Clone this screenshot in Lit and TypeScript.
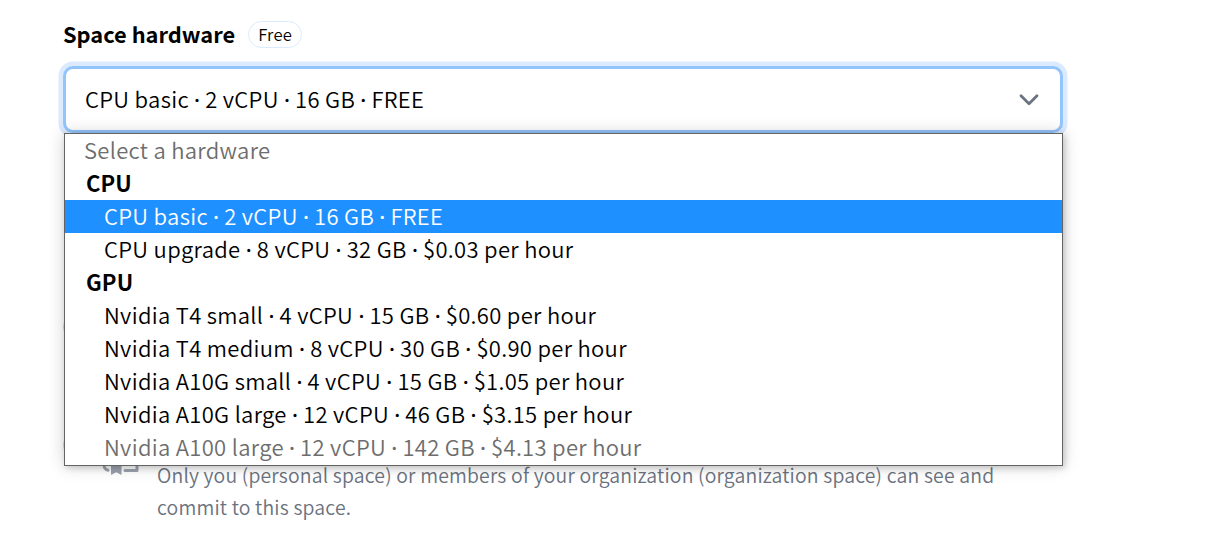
import { LitElement, html, css, svg } from "lit";
import { customElement } from "lit/decorators.js";
import { classMap } from "lit/directives/class-map.js";

type Row = { label: string; kind: "placeholder" | "group" | "option"; selected?: boolean; disabled?: boolean };

const ROWS: Row[] = [
  { label: "Select a hardware", kind: "placeholder" },
  { label: "CPU", kind: "group" },
  { label: "CPU basic · 2 vCPU · 16 GB · FREE", kind: "option", selected: true },
  { label: "CPU upgrade · 8 vCPU · 32 GB · $0.03 per hour", kind: "option" },
  { label: "GPU", kind: "group" },
  { label: "Nvidia T4 small · 4 vCPU · 15 GB · $0.60 per hour", kind: "option" },
  { label: "Nvidia T4 medium · 8 vCPU · 30 GB · $0.90 per hour", kind: "option" },
  { label: "Nvidia A10G small · 4 vCPU · 15 GB · $1.05 per hour", kind: "option" },
  { label: "Nvidia A10G large · 12 vCPU · 46 GB · $3.15 per hour", kind: "option" },
  { label: "Nvidia A100 large · 12 vCPU · 142 GB · $4.13 per hour", kind: "option", disabled: true },
];

// The middle dot takes a Latin face, where it is not full width.
const dotted = (label: string) =>
  label.split("·").map((part, i) => (i ? html`<span class="dot">·</span>${part}` : part));

@customElement("hardware-select")
export class HardwareSelect extends LitElement {
  static styles = css`
    :host { display: block; position: relative; }
    .field {
      box-sizing: border-box;
      height: 67px;
      margin-left: -1px;
      display: flex;
      align-items: center;
      justify-content: space-between;
      padding: 0 20px 3px 19px;
      border: 3px solid #93c5fd;
      border-radius: 10px;
      box-shadow: 0 0 0 4.5px #dbeafe;
      background: #fff;
      color: #000;
      font-size: 22px;
      letter-spacing: 0.31px;
      line-height: 33px;
    }
    .chevron { display: block; width: 22px; height: 14px; margin-top: 3px; }
    .menu {
      position: absolute;
      left: 0;
      top: 67px;
      width: 999px;
      height: 333px;
      box-sizing: border-box;
      border: 1px solid #646464;
      background: #fff;
      box-shadow: 0 0 16px rgba(0, 0, 0, 0.18), 2px 2px 6px rgba(0, 0, 0, 0.16);
      font-size: 22px;
      letter-spacing: 0.31px;
    }
    .row { box-sizing: border-box; height: 33px; line-height: 31px; padding-left: 39px; color: #000; white-space: nowrap; }
    .placeholder { padding-left: 19px; color: #6d6d6d; }
    .group { padding-left: 21px; font-weight: 700; letter-spacing: 0.1px; }
    .selected { background: #1e90ff; color: #fff; }
    .disabled { color: #6d6d6d; }
    .dot { font-family: "Noto Sans", sans-serif; font-weight: 500; letter-spacing: -0.1px; line-height: 1; }
  `;

  render() {
    return html`
      <div class="field">
        <span>${dotted("CPU basic · 2 vCPU · 16 GB · FREE")}</span>
        <svg class="chevron" viewBox="0 0 22 14" fill="none">
          <path d="M3 2.8 11 10.8 19 2.8" stroke="#6b7280" stroke-width="2.8" stroke-linecap="round" stroke-linejoin="round" />
        </svg>
      </div>
      <div class="menu">
        ${ROWS.map(
          (r) => html`<div class=${classMap({ row: true, [r.kind]: true, selected: !!r.selected, disabled: !!r.disabled })}><span>${dotted(r.label)}</span></div>`
        )}
      </div>
    `;
  }
}

@customElement("app-root")
export class AppRoot extends LitElement {
  static styles = css`
    :host {
      display: block;
      box-sizing: border-box;
      width: 1206px;
      height: 546px;
      overflow: hidden;
      padding: 17px 0 0 64px;
      background: #fff;
      font-family: "Noto Sans CJK SC", "Noto Sans", sans-serif;
      font-weight: 350;
    }
    .heading { display: flex; align-items: center; height: 33px; margin-bottom: 16px; }
    .title { margin-left: -1px; font-size: 21.8px; line-height: 33px; font-weight: 600; color: #000; white-space: nowrap; }
    .badge {
      box-sizing: border-box;
      width: 54px;
      height: 27px;
      margin-left: 13px;
      margin-top: 2px;
      border: 1px solid #dbeafe;
      border-radius: 14px;
      font-size: 16.6px;
      line-height: 24px;
      letter-spacing: 0.2px;
      text-align: center;
      color: #000;
    }
    hardware-select { width: 999px; z-index: 1; }
    .visibility { display: grid; row-gap: 94px; margin-top: 182px; }
    .choice { display: flex; height: 24px; align-items: center; }
    .radio { box-sizing: border-box; width: 24px; height: 24px; margin-left: -1px; border: 1px solid #d1d5db; border-radius: 50%; }
    .icon { width: 38px; height: 38px; margin: 22px 0 0 15px; flex: none; }
    .hint { margin: 2px 0 0 93px; width: 860px; font-size: 19.4px; letter-spacing: 0.18px; line-height: 32px; color: #6b7280; white-space: nowrap; }
  `;

  render() {
    return html`
      <div class="heading">
        <span class="title">Space hardware</span>
        <span class="badge"><span>Free</span></span>
      </div>
      <hardware-select></hardware-select>
      <div class="visibility">
        <div class="choice"><span class="radio"></span></div>
        <div class="choice">
          <span class="radio"></span>
          <svg class="icon" viewBox="0 0 38 38" fill="none">
            ${svg`<path d="M2 8V28Q2 32 6 33.2M23 33.5H35V5H9Q2 5 2 10" stroke="#9ca3af" stroke-width="3" stroke-linecap="round" stroke-linejoin="round" />
            <path d="M9 25H19.5V38L14.2 35.3L9 38Z" fill="#9ca3af" />`}
          </svg>
        </div>
      </div>
      <div class="hint"><span>Only you (personal space) or members of your organization (organization space) can see and</span><br /><span>commit to this space.</span></div>
    `;
  }
}
